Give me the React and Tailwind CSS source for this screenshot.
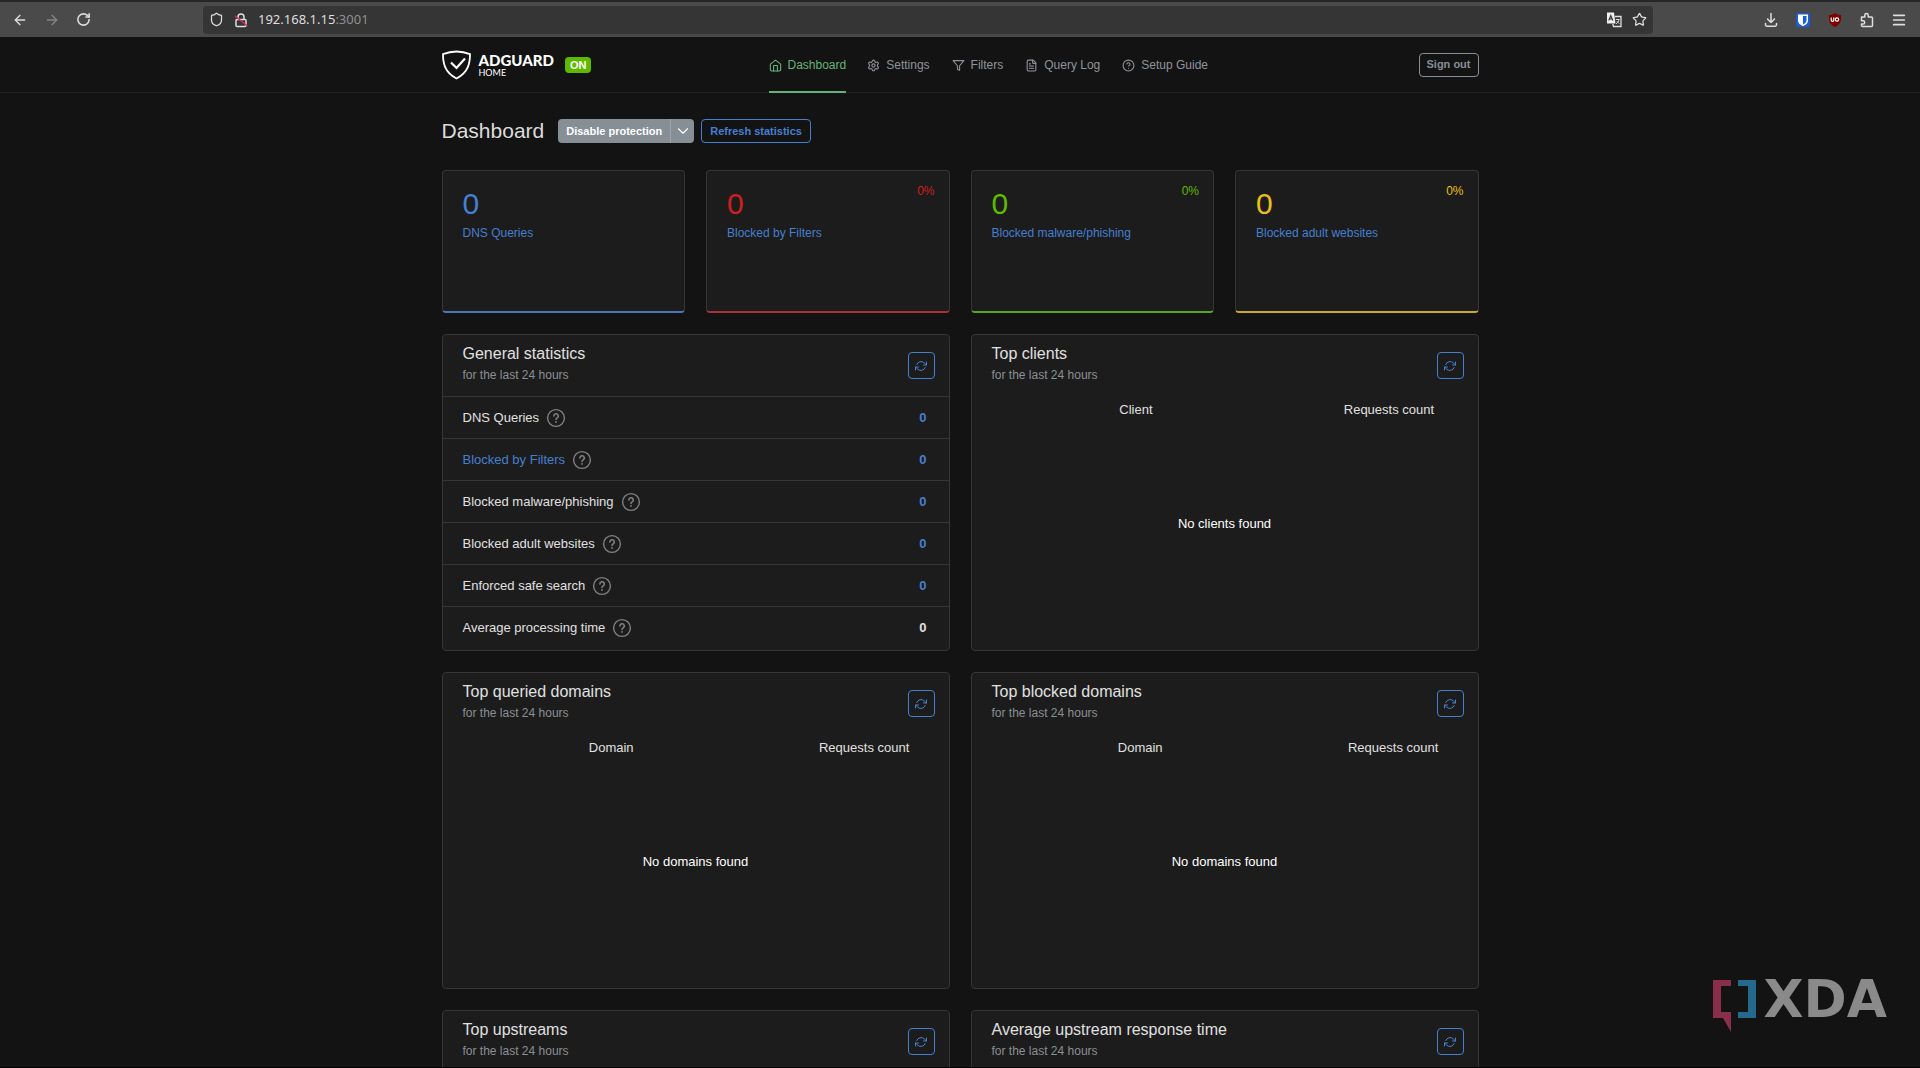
import React from "react";
import {
    ArrowLeft,
    ArrowRight,
    RotateCw,
    Shield,
    Star,
    Menu,
    Settings,
    FileText,
    CircleQuestionMark,
    ChevronDown,
} from "lucide-react";

const HomeIcon = () => (
    <svg viewBox="0 0 24 24" className="h-[13px] w-[13px]" fill="none" stroke="currentColor" strokeWidth="2" strokeLinecap="round" strokeLinejoin="round">
        <path d="M2.5 9.500 12 2l9.500 7.500V19.500a2.500 2.500 0 0 1-2.500 2.500H5a2.500 2.500 0 0 1-2.500-2.500z" />
        <path d="M8.500 22V12h7v10" />
    </svg>
);

const FilterIcon = () => (
    <svg viewBox="0 0 24 24" className="h-[13px] w-[13px]" fill="none" stroke="currentColor" strokeWidth="2" strokeLinecap="round" strokeLinejoin="round">
        <path d="M22 3H2l8 9.460V19l4 2v-8.540z" />
    </svg>
);

const HelpIcon = () => (
    <svg viewBox="0 0 20 20" className="h-5 w-5" fill="none" stroke="#808080" strokeLinecap="round" strokeLinejoin="round">
        <circle cx="10" cy="10" r="8.400" strokeWidth="1.400" />
        <path d="M7.900 8a2.200 2.200 0 1 1 3.300 1.900c-.8.5-1.200.8-1.200 1.600" strokeWidth="1.600" />
        <path d="M10 13.800v.1" strokeWidth="1.800" />
    </svg>
);

const navItems = [
    { label: "Dashboard", icon: <HomeIcon />, active: true },
    { label: "Settings", icon: <Settings size={13} /> },
    { label: "Filters", icon: <FilterIcon /> },
    { label: "Query Log", icon: <FileText size={13} /> },
    { label: "Setup Guide", icon: <CircleQuestionMark size={13} /> },
];

const counters = [
    { label: "DNS Queries", text: "text-[#467fcf]", border: "border-b-[#4a76bd]" },
    { label: "Blocked by Filters", text: "text-[#cd201f]", border: "border-b-[#a83236]", percent: "0%" },
    { label: "Blocked malware/phishing", text: "text-[#5eba00]", border: "border-b-[#5aa51f]", percent: "0%" },
    { label: "Blocked adult websites", text: "text-[#e8c018]", border: "border-b-[#c9aa2a]", percent: "0%" },
];

const generalStats = [
    { label: "DNS Queries" },
    { label: "Blocked by Filters", link: true },
    { label: "Blocked malware/phishing" },
    { label: "Blocked adult websites" },
    { label: "Enforced safe search" },
    { label: "Average processing time", plain: true },
];

const BrowserBar = () => (
    <div className="flex h-[37px] shrink-0 items-center border-t-2 border-[#262626] bg-[#4a4a4a] pr-[13px] pl-[12px] text-[#dedede]">
        <div className="flex w-[191px] shrink-0 items-center gap-4">
            <button type="button" aria-label="Back"><ArrowLeft size={16} /></button>
            <button type="button" aria-label="Forward" className="text-[#858585]"><ArrowRight size={16} /></button>
            <button type="button" aria-label="Reload"><RotateCw size={15} strokeWidth={2.5} /></button>
        </div>
        <div className="flex h-[28px] min-w-0 flex-1 items-center rounded-sm bg-[#353535] px-[6px]">
            <Shield size={15} className="shrink-0" />
            <svg viewBox="0 0 16 16" className="ml-[9px] h-4 w-4 shrink-0" fill="none" stroke="#dedede" strokeWidth="1.500">
                <rect x="3" y="7.500" width="10" height="7" rx="1" />
                <path d="M5 7.500V5a3 3 0 0 1 6 0v2.500" />
                <path d="M2 4l12.500 10" stroke="#d0305a" />
            </svg>
            <div className="ml-[9px] flex min-w-0 flex-1 items-center font-['Noto_Sans',sans-serif] text-[13px]">
                <input
                    type="text"
                    aria-label="Address"
                    defaultValue="192.168.1.15"
                    className="field-sizing-content bg-transparent outline-none"
                />
                <span className="text-[#909090]">:3001</span>
            </div>
            <div className="flex shrink-0 items-center gap-[10px]">
                <button type="button" aria-label="Translate page">
                    <svg viewBox="0 0 16 16" className="h-4 w-4">
                        <path d="M1 0.500h7l1.500 11H1z" fill="#f0f0f0" />
                        <path d="M2.800 8.500 4.800 3.500l2 5M3.500 7h2.600" fill="none" stroke="#353535" strokeWidth="1.200" />
                        <path d="M9 4.500h6v10H7.500L6.800 12" fill="none" stroke="#e0e0e0" strokeWidth="1.300" />
                        <path d="M9.800 7.500h3.700M13 7.500c-.3 2-1.500 3.500-3 4.300M10.800 9.200l2.500 2.600" fill="none" stroke="#e0e0e0" />
                    </svg>
                </button>
                <button type="button" aria-label="Bookmark"><Star size={15} /></button>
            </div>
        </div>
        <div className="ml-[110px] flex shrink-0 items-center gap-4">
            <button type="button" aria-label="Downloads">
                <svg viewBox="0 0 16 16" className="h-4 w-4" fill="none" stroke="currentColor" strokeWidth="1.500" strokeLinecap="round" strokeLinejoin="round">
                    <path d="M8 1.500v9M4.500 7 8 10.500 11.500 7M2.500 11.500v1.200A1.500 1.500 0 0 0 4 14.200h8a1.500 1.500 0 0 0 1.500-1.500v-1.200" />
                </svg>
            </button>
            <button type="button" aria-label="Bitwarden">
                <svg viewBox="0 0 16 16" className="h-4 w-4">
                    <rect x="1" y="1" width="14" height="14" rx="2" fill="#175ddc" />
                    <path d="M3 2.500h10v6c0 3-3 4.800-5 5.700-2-.9-5-2.700-5-5.700z" fill="#fff" />
                    <path d="M8 4h3.500v4.500c0 2-2 3.300-3.500 4z" fill="#175ddc" />
                </svg>
            </button>
            <button type="button" aria-label="uBlock Origin">
                <svg viewBox="0 0 16 16" className="h-4 w-4">
                    <path d="M8 1c2 1.400 4 2 6 2v4c0 4-3 6.500-6 8-3-1.500-6-4-6-8V3c2 0 4-.6 6-2z" fill="#800000" />
                    <path d="M4.200 5.500V8a1.300 1.300 0 0 0 2.600 0V5.500" fill="none" stroke="#fff" strokeWidth="1.200" />
                    <circle cx="10" cy="7.500" r="1.700" fill="none" stroke="#fff" strokeWidth="1.200" />
                </svg>
            </button>
            <button type="button" aria-label="Extensions">
                <svg viewBox="0 0 16 16" className="h-4 w-4" fill="none" stroke="currentColor" strokeWidth="1.500" strokeLinejoin="round">
                    <path d="M2.500 5h3.300V3.200a1.700 1.700 0 0 1 3.400 0V5h3.300a1 1 0 0 1 1 1v7.500a1 1 0 0 1-1 1h-9a1 1 0 0 1-1-1V12h1.600a1.600 1.600 0 0 0 0-3.200H2.500z" />
                </svg>
            </button>
            <button type="button" aria-label="Menu"><Menu size={16} strokeWidth={2.5} /></button>
        </div>
    </div>
);

const Header = () => (
    <header className="h-[56px] shrink-0 border-b border-[#222]">
        <div className="mx-auto flex h-full max-w-[1037px] items-center">
            <a href="#dashboard" className="flex w-[327px] shrink-0 items-center text-white">
                <svg viewBox="0 0 30 30" className="h-[30px] w-[30px]" fill="none" stroke="#fff" strokeWidth="1.800">
                    <path d="M14.500 1.500c4.500 0 9.200.9 13.500 2.600 0 8-1 17.900-13.500 24.400C2 22 1 12.100 1 4.100 5.300 2.400 10 1.500 14.500 1.500z" />
                    <path d="m9 12.500 5.500 5.500 8.500-9.500" strokeWidth="2.200" />
                </svg>
                <span className="ml-[7px] flex flex-col font-[Lato,sans-serif]">
                    <span className="text-[15px] leading-[16px] font-black">ADGUARD</span>
                    <span className="text-[9px] leading-[10px]">HOME</span>
                </span>
                <span className="ml-[11px] rounded-sm bg-[#5eba00] px-[5px] text-[11px] leading-[16px] font-bold">ON</span>
            </a>
            <nav className="flex h-full items-center gap-[21px]">
                {navItems.map((item) => (
                    <a
                        key={item.label}
                        href="#nav"
                        className={
                            item.active
                                ? "-mb-px flex h-[56px] items-center gap-[6px] border-b-2 border-[#67b279] pt-0.5 text-[12px] text-[#67b279]"
                                : "-mb-px flex h-[56px] items-center gap-[6px] pr-px text-[12px] text-[#8f9399]"
                        }
                    >
                        {item.icon}
                        {item.label}
                    </a>
                ))}
            </nav>
            <button type="button" className="ml-auto h-[24px] rounded-sm border border-[#868e96] px-[7px] text-[11px] font-bold text-[#868e96]">
                Sign out
            </button>
        </div>
    </header>
);

const RefreshButton = () => (
    <button
        type="button"
        aria-label="Refresh"
        className="flex h-[27px] w-[27px] shrink-0 items-center justify-center rounded-sm border border-[#467fcf] text-[#467fcf]"
    >
        <svg viewBox="0 0 24 24" className="h-3 w-3" fill="none" stroke="currentColor" strokeWidth="2" strokeLinecap="round" strokeLinejoin="round">
            <path d="M23 4v6h-6M1 20v-6h6" />
            <path d="M3.510 9a9 9 0 0 1 14.850-3.360L23 10M1 14l4.640 4.360A9 9 0 0 0 20.490 15" />
        </svg>
    </button>
);

const Card = ({ title, children }) => (
    <section className="flex h-[317px] flex-col rounded-sm border border-[#363636] bg-[#1c1c1c]">
        <div className="flex h-[61px] shrink-0 items-center justify-between pr-[14px] pl-[20px]">
            <div className="pb-1">
                <h2 className="text-[16px] leading-[22px] text-[#e0e0e0]">{title}</h2>
                <p className="text-[12px] leading-[20px] text-[#8b8f94]">for the last 24 hours</p>
            </div>
            <RefreshButton />
        </div>
        {children}
    </section>
);

const EmptyTable = ({ name, nameWidth, empty }) => (
    <div className="flex flex-1 flex-col">
        <table className="w-full table-fixed text-[13px] leading-[28px] text-[#e0e0e0]">
            <thead>
                <tr>
                    <th className={`font-normal ${nameWidth}`}>{name}</th>
                    <th className="font-normal">Requests count</th>
                </tr>
            </thead>
        </table>
        <p className="flex flex-1 items-center justify-center pb-[26px] text-[13px] text-white">{empty}</p>
    </div>
);

const GeneralStatistics = () => (
    <table className="w-full text-[13px] text-[#e0e0e0]">
        <tbody>
            {generalStats.map((row) => (
                <tr key={row.label} className="h-[42px] border-t border-[#363636]">
                    <td className="pl-[20px]">
                        <div className="flex items-center gap-[7px]">
                            {row.link ? <a href="#logs" className="text-[#467fcf]">{row.label}</a> : row.label}
                            <HelpIcon />
                        </div>
                    </td>
                    <td className={row.plain ? "pr-[22px] text-right font-bold" : "pr-[22px] text-right font-bold text-[#467fcf]"}>0</td>
                </tr>
            ))}
        </tbody>
    </table>
);

// Channel watermark in the corner
const Watermark = () => (
    <div className="pointer-events-none fixed right-[33px] bottom-[35px] flex items-start gap-[8px]" aria-hidden="true">
        <svg viewBox="0 0 43 53" className="h-[53px] w-[43px]">
            <path d="M0 0h18v6H8v26h10v20L10 38H0z" fill="#8a2f4b" />
            <path d="M25 0h18v38H25v-6h10V6H25z" fill="#256a8c" />
        </svg>
        <span className="font-['DejaVu_Sans',sans-serif] text-[52px] leading-[38px] font-bold text-[#8a8a8a]">XDA</span>
    </div>
);

const App = () => {
    return (
        <div className="flex h-screen flex-col overflow-hidden border-b border-black bg-[#131313] font-['Liberation_Sans',Arial,sans-serif]">
            <BrowserBar />
            <Header />
            <main className="min-h-0 flex-1 overflow-hidden">
                <div className="mx-auto max-w-[1037px] pt-[26px]">
                    <div className="mb-[27px] flex h-[24px] items-center">
                        <h1 className="text-[21px] leading-[24px] text-[#dcdcdc]">Dashboard</h1>
                        <div className="ml-[14px] flex h-full rounded-sm bg-[#868e96] text-white">
                            <button type="button" className="px-[8px] text-[11px] font-bold">Disable protection</button>
                            <button type="button" aria-label="Pause options" className="flex w-[24px] items-center justify-center border-l border-[#9aa1a8]">
                                <ChevronDown size={18} strokeWidth={1.5} />
                            </button>
                        </div>
                        <button type="button" className="ml-[7px] h-full rounded-sm border border-[#467fcf] px-[8px] text-[11px] font-bold text-[#467fcf]">
                            Refresh statistics
                        </button>
                    </div>

                    <div className="grid grid-cols-4 gap-[21px]">
                        {counters.map((item) => (
                            <div key={item.label} className={`flex h-[143px] justify-between rounded-sm border border-b-2 border-[#363636] bg-[#1c1c1c] pt-[11px] pr-[14px] pl-[20px] ${item.border}`}>
                                <div className="pt-[8px]">
                                    <div className={`text-[30px] leading-[28px] ${item.text}`}>0</div>
                                    <a href="#logs" className="mt-[6px] block text-[12px] leading-[18px] text-[#467fcf]">{item.label}</a>
                                </div>
                                {item.percent && <div className={`text-[12px] leading-[18px] ${item.text}`}>{item.percent}</div>}
                            </div>
                        ))}
                    </div>

                    <div className="mt-[21px] grid grid-cols-2 gap-[21px]">
                        <Card title="General statistics">
                            <GeneralStatistics />
                        </Card>
                        <Card title="Top clients">
                            <EmptyTable name="Client" nameWidth="w-[65%]" empty="No clients found" />
                        </Card>
                        <Card title="Top queried domains">
                            <EmptyTable name="Domain" nameWidth="w-2/3" empty="No domains found" />
                        </Card>
                        <Card title="Top blocked domains">
                            <EmptyTable name="Domain" nameWidth="w-2/3" empty="No domains found" />
                        </Card>
                        <Card title="Top upstreams" />
                        <Card title="Average upstream response time" />
                    </div>
                </div>
            </main>
            <Watermark />
        </div>
    );
};

export default App;
